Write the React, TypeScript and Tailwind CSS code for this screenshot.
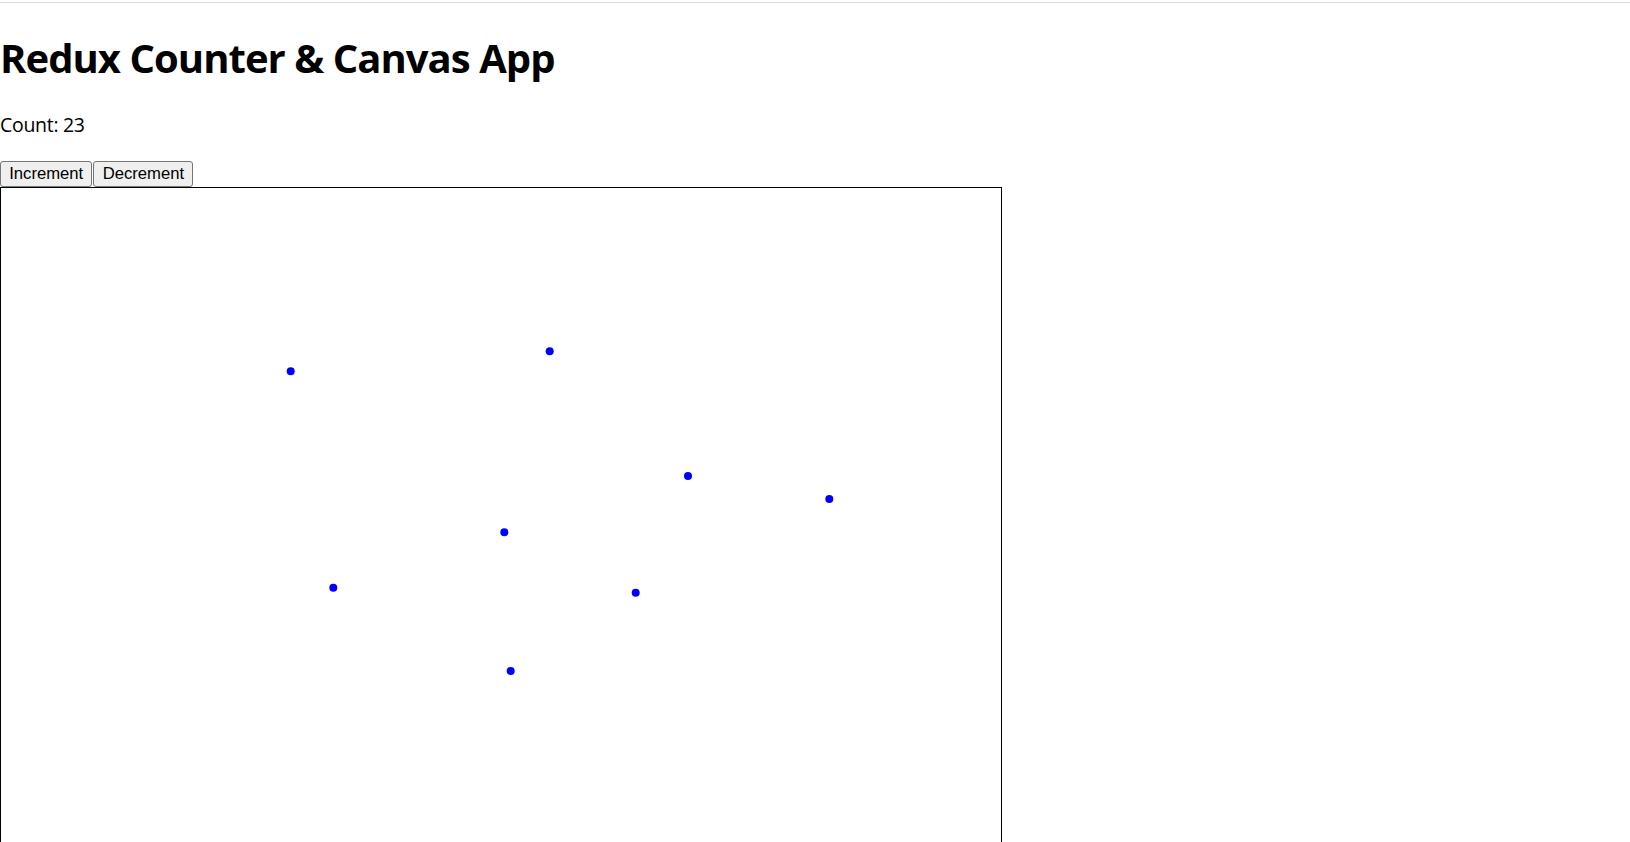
import React from "react";

const dots: [number, number][] = [
  [290.7, 371.3],
  [549.7, 351.3],
  [688, 476],
  [829.3, 499],
  [504.3, 532.3],
  [333.3, 587.7],
  [635.7, 592.7],
  [510.7, 671],
];

export default function App() {
  return (
    <div className="min-h-screen bg-white text-black overflow-hidden" style={{ fontFamily: '"Open Sans", "Noto Sans", sans-serif' }}>
      <div className="h-[2px]" />
      <div className="h-px bg-[#dcdcdc]" />
      <h1 className="text-[40px] font-bold leading-[54px] mt-[28px] mb-0 tracking-[-0.95px]">Redux Counter &amp; Canvas App</h1>
      <p className="text-[19.5px] leading-[27px] mt-[25.5px] tracking-[-0.3px]">Count: 23</p>
      <div className="flex mt-[23px] h-[26px]" style={{ fontFamily: '"Liberation Sans", Arial, sans-serif' }}>
        <button className="h-[26px] px-[8.2px] text-[16.67px] leading-[20px] bg-[#efefef] border border-[#767676] rounded-[3px] text-black">Increment</button>
        <button className="h-[26px] px-[8.2px] text-[16.67px] leading-[20px] bg-[#efefef] border border-[#767676] rounded-[3px] text-black ml-[1px]">Decrement</button>
      </div>
      <div className="w-[1002px] h-[752px] border border-black">
        <svg width="1000" height="750" className="block">
          {dots.map(([x, y], i) => (
            <circle key={i} cx={x - 1} cy={y - 188} r={4} fill="#0000ff" />
          ))}
        </svg>
      </div>
    </div>
  );
}
